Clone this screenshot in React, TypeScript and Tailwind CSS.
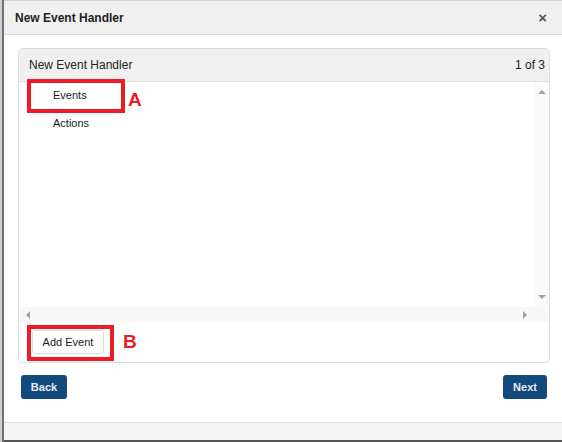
import React from "react";

function Tri({ dir }: { dir: "up" | "down" | "left" | "right" }) {
  const pts =
    dir === "up"
      ? "0,5 4,1 8,5"
      : dir === "down"
      ? "0,1 8,1 4,5"
      : dir === "left"
      ? "5,0 5,8 1,4"
      : "1,0 1,8 5,4";
  const w = dir === "up" || dir === "down" ? 8 : 6;
  const h = dir === "up" || dir === "down" ? 6 : 8;
  return (
    <svg width={w} height={h} viewBox={`0 0 ${w} ${h}`}>
      <polygon points={pts} fill="#a3a3a3" />
    </svg>
  );
}

export default function App() {
  return (
    <div
      className="relative w-[562px] h-[442px] flex bg-white overflow-hidden"
      style={{ fontFamily: '"Liberation Sans", Arial, sans-serif' }}
    >
      <div className="w-[2px] bg-[#cfcfcf]" />
      <div className="w-[2px] bg-[#707070]" />
      <div className="flex-1 flex flex-col border-t border-[#d4d4d4]">
        {/* header */}
        <div className="h-[34px] bg-[#f0f0f0] border-b border-[#dcdcdc] flex items-center justify-between pl-[11px] pr-[15px]">
          <span className="text-[12px] font-bold text-[#222]">New Event Handler</span>
          <span className="text-[15px] font-bold text-[#555] leading-none">×</span>
        </div>
        {/* body */}
        <div className="h-[387px] flex flex-col pt-[13px] pl-[14px] pr-[12px]">
          <div className="border border-[#dcdcdc] rounded-[4px] flex flex-col h-[315px]">
            <div className="h-[33px] bg-[#f0f0f0] border-b border-[#e0e0e0] flex items-center justify-between pl-[10px] pr-[4px] rounded-t-[4px]">
              <span className="text-[12px] text-[#222]">New Event Handler</span>
              <span className="text-[12px] text-[#222]">1 of 3</span>
            </div>
            <div className="h-[225px] flex">
              <div className="flex-1 flex flex-col pl-[34px] pt-[1px]">
                <div className="h-[24px] flex items-center text-[11px] text-[#1a1a1a]">Events</div>
                <div className="h-[33px] flex items-center text-[11px] text-[#1a1a1a]">Actions</div>
              </div>
              <div className="w-[15px] bg-[#fafafa] flex flex-col items-center justify-between pt-[7px] pb-[7px]">
                <Tri dir="up" />
                <Tri dir="down" />
              </div>
            </div>
            <div className="h-[15px] bg-[#f8f8f8] flex items-center justify-between pl-[6px] pr-[21px]">
              <Tri dir="left" />
              <Tri dir="right" />
            </div>
            <div className="flex-1 flex items-start pl-[13px] pt-[8px]">
              <div className="w-[72px] h-[24px] border border-[#dcdcdc] rounded-[3px] bg-white flex items-center justify-center text-[11px] text-[#1a1a1a]">
                Add Event
              </div>
            </div>
          </div>
          <div className="flex justify-between pt-[12px] pl-[3px] pr-[3px]">
            <div className="w-[46px] h-[24px] bg-[#134a7c] rounded-[3px] flex items-center justify-center text-[11px] font-bold text-[#e6ecf2]">
              Back
            </div>
            <div className="w-[44px] h-[24px] bg-[#134a7c] rounded-[3px] flex items-center justify-center text-[11px] font-bold text-[#e6ecf2]">
              Next
            </div>
          </div>
        </div>
        {/* footer */}
        <div className="flex-1 bg-[#f4f4f4] border-t border-[#dcdcdc]" />
        <div className="h-[2px] bg-[#555]" />
      </div>

      {/* annotations */}
      <div className="absolute left-[27px] top-[79px] w-[98px] h-[34px] border-[4px] border-[#ed1c24]" />
      <div className="absolute left-[128px] top-[90px] text-[19px] leading-none font-bold text-[#ed1c24]">A</div>
      <div className="absolute left-[27px] top-[325px] w-[87px] h-[36px] border-[4px] border-[#ed1c24]" />
      <div className="absolute left-[123px] top-[332px] text-[19px] leading-none font-bold text-[#ed1c24]">B</div>
    </div>
  );
}
